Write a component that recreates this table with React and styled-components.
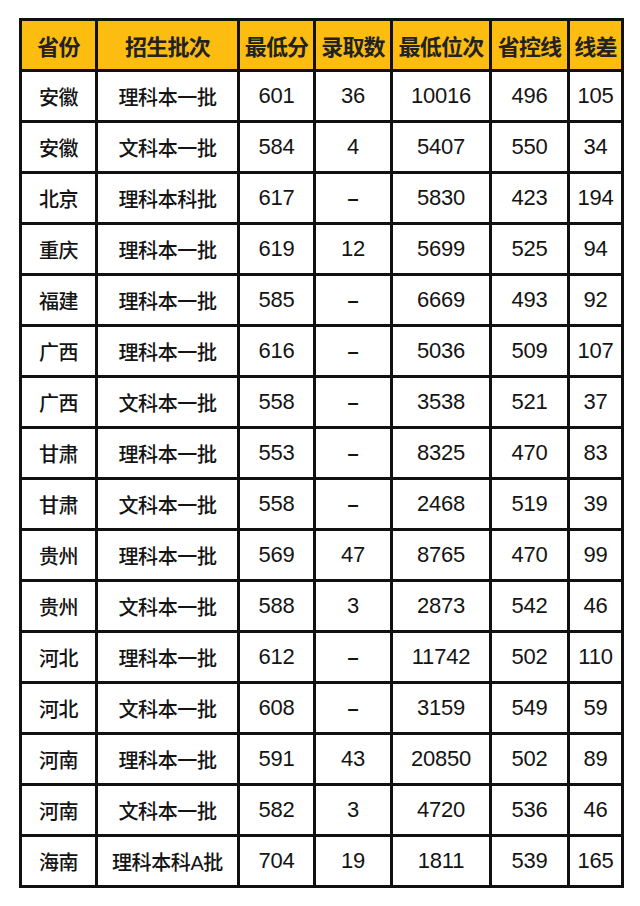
import React from "react";
import styled, {createGlobalStyle} from "styled-components";

const GlobalStyle = createGlobalStyle`
    html, body {
        margin: 0;
        padding: 0;
        background: #ffffff;
    }
    body {
        font-family: "Liberation Sans", "Noto Sans CJK SC", sans-serif;
    }
`;

const columns = [
    {title: "省份", width: 76},
    {title: "招生批次", width: 142},
    {title: "最低分", width: 76},
    {title: "录取数", width: 77},
    {title: "最低位次", width: 99},
    {title: "省控线", width: 78},
    {title: "线差", width: 54},
];

const rows = [
    ["安徽", "理科本一批", "601", "36", "10016", "496", "105"],
    ["安徽", "文科本一批", "584", "4", "5407", "550", "34"],
    ["北京", "理科本科批", "617", "–", "5830", "423", "194"],
    ["重庆", "理科本一批", "619", "12", "5699", "525", "94"],
    ["福建", "理科本一批", "585", "–", "6669", "493", "92"],
    ["广西", "理科本一批", "616", "–", "5036", "509", "107"],
    ["广西", "文科本一批", "558", "–", "3538", "521", "37"],
    ["甘肃", "理科本一批", "553", "–", "8325", "470", "83"],
    ["甘肃", "文科本一批", "558", "–", "2468", "519", "39"],
    ["贵州", "理科本一批", "569", "47", "8765", "470", "99"],
    ["贵州", "文科本一批", "588", "3", "2873", "542", "46"],
    ["河北", "理科本一批", "612", "–", "11742", "502", "110"],
    ["河北", "文科本一批", "608", "–", "3159", "549", "59"],
    ["河南", "理科本一批", "591", "43", "20850", "502", "89"],
    ["河南", "文科本一批", "582", "3", "4720", "536", "46"],
    ["海南", "理科本科A批", "704", "19", "1811", "539", "165"],
];

const App = () => {
    return (
        <Page>
            <GlobalStyle />
            <ScoreTable>
                <colgroup>
                    {columns.map((col) => (
                        <col key={col.title} style={{width: col.width}} />
                    ))}
                </colgroup>
                <thead>
                    <HeadRow>
                        {columns.map((col) => (
                            <HeadCell key={col.title}>{col.title}</HeadCell>
                        ))}
                    </HeadRow>
                </thead>
                <tbody>
                    {rows.map((row, i) => (
                        <BodyRow key={i}>
                            {row.map((value, j) => (
                                <Cell key={j} $text={j < 2} $dash={value === "–"}>{value}</Cell>
                            ))}
                        </BodyRow>
                    ))}
                </tbody>
            </ScoreTable>
        </Page>
    );
};

export default App;

const Page = styled.div`
    width: 640px;
    height: 906px;
    padding: 18px 0 0 19px;
    box-sizing: border-box;
    background: #ffffff;
`;

const ScoreTable = styled.table`
    width: 602px;
    table-layout: fixed;
    border-collapse: collapse;
    border: 3px solid #111111;
`;

const HeadRow = styled.tr`
    height: 51px;
    background: #fcbc10;
`;

const BodyRow = styled.tr`
    height: 51px;
    background: #ffffff;
`;

const HeadCell = styled.th`
    border: 3px solid #111111;
    padding: 0;
    text-align: center;
    vertical-align: middle;
    font-size: 22px;
    font-weight: 700;
    color: #222222;
    white-space: nowrap;
    letter-spacing: -0.8px;
`;

const Cell = styled.td`
    border: 3px solid #111111;
    padding: 0;
    text-align: center;
    vertical-align: middle;
    font-size: 22px;
    color: #141414;
    white-space: nowrap;
    letter-spacing: -0.2px;
    ${(props) => props.$text && `
        font-size: 20px;
        font-weight: 500;
        letter-spacing: -0.4px;
    `}
    ${(props) => props.$dash && `
        font-size: 20px;
        font-weight: 700;
    `}
`;
